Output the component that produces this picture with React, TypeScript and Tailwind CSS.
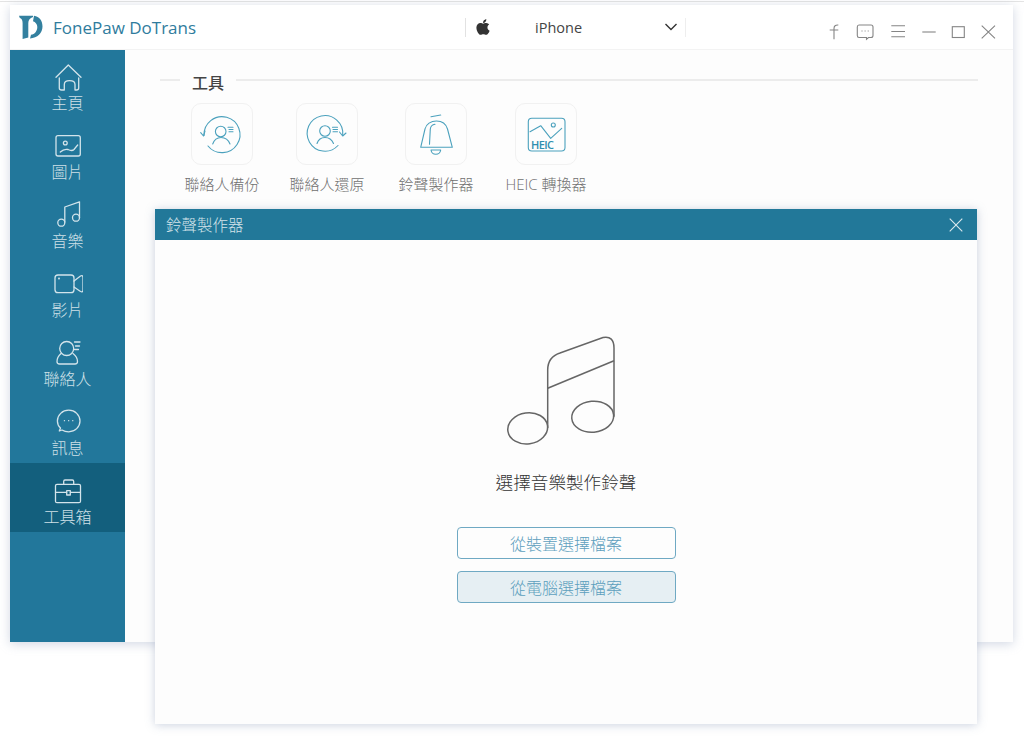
import type { ReactNode } from "react";
import { FaApple } from "react-icons/fa";

const fontClass = "font-['Open_Sans','Noto_Sans_CJK_TC',sans-serif]";

// icons are drawn in page coordinates, the viewBox crops to the slot they sit in
function SideIcon({ box, children }: { box: string; children: ReactNode }) {
  return (
    <svg width="30" height="30" viewBox={box} fill="none" stroke="#d3e4eb" strokeWidth="1.3" strokeLinecap="round" strokeLinejoin="round">
      {children}
    </svg>
  );
}

function TopIcon({ center, children }: { center: number; children: ReactNode }) {
  return (
    <svg width="20" height="20" viewBox={`${center - 10} 22 20 20`} fill="none" stroke="#858585" strokeWidth="1.1">
      {children}
    </svg>
  );
}

function ToolIcon({ box, children }: { box: string; children: ReactNode }) {
  return (
    <svg width="60" height="60" viewBox={box} fill="none" stroke="#4ba1bd" strokeWidth="1.1" strokeLinecap="round" strokeLinejoin="round">
      {children}
    </svg>
  );
}

const sideItems = [
  {
    label: "主頁",
    icon: (
      <SideIcon box="52 63 30 30">
        <path d="M55 77.3 L67.3 65 L80 77.3" />
        <path d="M58.3 78 V88 Q58.3 90 60.5 90 H63.3 V84.5 Q63.3 80.7 68.5 80.7 Q74 80.7 74 84.5 V90 H75.5 Q77.7 90 77.7 88 V78" />
      </SideIcon>
    )
  },
  {
    label: "圖片",
    icon: (
      <SideIcon box="52 132 30 30">
        <rect x="55" y="135.7" width="24.3" height="20.3" rx="2" />
        <circle cx="64.3" cy="143" r="1.9" />
        <path d="M59.3 152 Q63 148.5 67 149.5 Q71 151.5 73 149.5 Q75 147 76.7 145" />
      </SideIcon>
    )
  },
  {
    label: "音樂",
    icon: (
      <SideIcon box="52 201 30 30">
        <circle cx="60.3" cy="222.7" r="3.5" />
        <circle cx="75" cy="217.7" r="3.5" />
        <path d="M63.8 222 V207 L78.5 201.8 V217.7" />
      </SideIcon>
    )
  },
  {
    label: "影片",
    icon: (
      <SideIcon box="52 270 30 30">
        <rect x="54" y="275" width="19" height="17.7" rx="3" />
        <path d="M73 281 L79.5 276 Q82 275 82 277.5 V290 Q82 292.5 79.5 291.5 L73 287" />
        <circle cx="58" cy="278.5" r="0.4" />
      </SideIcon>
    )
  },
  {
    label: "聯絡人",
    icon: (
      <SideIcon box="52 339 30 30">
        <circle cx="65.7" cy="348.5" r="7" />
        <path d="M60 353.5 Q56 357 56 361.5 Q56 364 58.5 364 H74 Q76.5 364 76.5 361.5 Q76.5 357 72 353.5" />
        <path d="M73.5 342 H79 M74.5 346 H78.5 M73.5 349.5 H77.5" />
      </SideIcon>
    )
  },
  {
    label: "訊息",
    icon: (
      <SideIcon box="52 408 30 30">
        <path d="M61 430 Q64 431.8 67.7 431.8 C74 431.8 79 427 79 421 C79 415 74 410.2 67.7 410.2 C61.4 410.2 56.4 415 56.4 421 C56.4 424 57.5 426.3 59.5 428 L58.3 431 Z" />
        <path d="M63.4 420.7 H63.5 M67.6 420.7 H67.7 M71.7 420.7 H71.8" />
      </SideIcon>
    )
  },
  {
    label: "工具箱",
    active: true,
    icon: (
      <SideIcon box="52 477 30 30">
        <rect x="54.5" y="484.3" width="25" height="18.4" rx="1.5" />
        <path d="M62.7 484.3 V481.5 Q62.7 480 64 480 H71.3 Q72.7 480 72.7 481.5 V484.3" />
        <path d="M54.5 492.3 H65.7 M69.3 492.3 H79.5" />
        <rect x="65.7" y="490.7" width="3.6" height="4.3" />
      </SideIcon>
    )
  }
];

const tools = [
  {
    label: "聯絡人備份",
    margin: "",
    icon: (
      <ToolIcon box="192 104 60 60">
        <path d="M204 135.5 A18 18 0 1 1 208 146" />
        <path d="M200.7 132.7 L203.5 136 L205 131" />
        <circle cx="220.7" cy="131.5" r="5.3" />
        <path d="M212.7 144 Q215 137.5 221 137.5 Q227.5 137.5 230 144" />
        <path d="M228 127.3 H233 M229 129.5 H233 M229 131.7 H233" />
      </ToolIcon>
    )
  },
  {
    label: "聯絡人還原",
    margin: "ml-[15px]",
    icon: (
      <ToolIcon box="297 104 60 60">
        <path d="M338 145.5 A17.8 17.8 0 1 1 342.7 135" />
        <path d="M339.5 132 L342.7 136 L346 133" />
        <circle cx="325" cy="131" r="5.3" />
        <path d="M317 143.5 Q319 137.5 325 137.5 Q331 137.5 333.5 143.5" />
        <path d="M332.5 127.3 H337.5 M333 129.5 H337.5 M333 131.7 H337.5" />
      </ToolIcon>
    )
  },
  {
    label: "鈴聲製作器",
    margin: "ml-[19px]",
    icon: (
      <ToolIcon box="406 104 60 60">
        <path d="M431 116.8 L440.7 115" />
        <path d="M420.7 147.3 L425 129 C426 124 431 121 436.5 121 C442 121 446 124 447.5 129 L452.3 147.3 Z" />
        <path d="M429.5 144.3 L430.3 129 Q430.8 125 435 124.3" />
        <path d="M431 150 H440.7 Q440 154.3 435.8 154.3 Q431.7 154.3 431 150 Z" />
      </ToolIcon>
    )
  },
  {
    label: "HEIC 轉換器",
    margin: "ml-[20px]",
    icon: (
      <ToolIcon box="516 104 60 60">
        <rect x="528.3" y="118.3" width="36.7" height="32.7" rx="3.5" />
        <path d="M530 131.7 L540.7 125.7 L550.7 138.3 L561.7 128.3" />
        <circle cx="553.3" cy="125" r="2" />
        <text x="531" y="149" fill="#2f8fb0" stroke="none" fontSize="11" fontWeight="600" fontFamily="'Open Sans',sans-serif" textLength="23">HEIC</text>
      </ToolIcon>
    )
  }
];

function Logo() {
  return (
    <svg width="24" height="24" viewBox="0 0 24 24" fill="#33809f">
      <path d="M0 .8 H14 V2 C11 3 9.3 5 9.3 8 V22.5 L3.6 24 V8 C3.6 5 2.5 3.3 .8 3 Z" />
      <path d="M15 .8 C20.5 1.5 23.5 6 23.5 11.5 C23.5 18 18.5 23 11 23.5 L12 19.8 C15.8 19.3 18.3 16 18.3 12 C18.3 9.3 16.5 7 14 6.2 Z" />
    </svg>
  );
}

export default function App() {
  return (
    <div className={`relative h-[736px] w-[1024px] overflow-hidden bg-white ${fontClass}`}>
      <div className="mt-[1px] h-[1px] bg-[#e4e4e4]" />
      <div className="ml-[10px] mt-[3px] flex h-[637px] w-[1003px] flex-col bg-[#fdfdfd] shadow-[0_2px_10px_rgba(140,155,185,0.4)]">
        <header className="flex h-[45px] shrink-0 items-center border-b border-[#f3f3f3] bg-white">
          <div className="ml-[9px] w-[24px]">
            <Logo />
          </div>
          <div className="ml-[10px] w-[150px] whitespace-nowrap pt-[1px] text-[17px] text-[#2f7c9d]">FonePaw DoTrans</div>
          <div className="ml-[262px] h-[19px] w-[1px] bg-[#e2e2e2]" />
          <FaApple className="ml-[8px] text-[#333]" size={18} />
          <div className="ml-[43px] w-[46px] whitespace-nowrap pt-[1px] text-[14.5px] text-[#444]">iPhone</div>
          <svg className="ml-[84px]" width="12" height="8" viewBox="0 0 12 8" fill="none" stroke="#333" strokeWidth="1.4">
            <path d="M.5 1 L6 6.5 L11.5 1" />
          </svg>
          <div className="ml-[8px] h-[19px] w-[1px] bg-[#eeeeee]" />
          <div className="ml-[138px] mt-[10px] flex">
            <TopIcon center={834}>
              <path d="M838.3 25 Q834 24.7 834 28.5 V39.3 M829.7 30 H838.3" />
            </TopIcon>
            <div className="ml-[11px]">
              <TopIcon center={865}>
                <path d="M859 25 H871 Q873 25 873 27 V35.5 Q873 37.5 871 37.5 H868.5 L866.5 39.3 L866.5 37.5 H859 Q857.3 37.5 857.3 35.5 V27 Q857.3 25 859 25 Z" />
                <path d="M861.5 31 H862.5 M864.6 31 H865.6 M867.7 31 H868.7" strokeWidth="1.2" />
              </TopIcon>
            </div>
            <div className="ml-[13px]">
              <TopIcon center={898}>
                <path d="M891.3 25.7 H905 M891.3 31.5 H905 M891.3 36.7 H905" />
              </TopIcon>
            </div>
            <div className="ml-[11px]">
              <TopIcon center={929}>
                <path d="M922.3 32 H935.7" />
              </TopIcon>
            </div>
            <div className="ml-[9px]">
              <TopIcon center={958}>
                <rect x="952.3" y="26.7" width="12" height="10.8" />
              </TopIcon>
            </div>
            <div className="ml-[10px]">
              <TopIcon center={988}>
                <path d="M981.7 25.7 L995 38.3 M995 25.7 L981.7 38.3" />
              </TopIcon>
            </div>
          </div>
        </header>
        <div className="flex min-h-0 flex-1">
          <aside className="w-[115px] shrink-0 bg-[#22779b] text-[16px] text-[#cfe0e7]">
            <div className="-mt-[1px]">
              {sideItems.map((item) => (
                <div key={item.label} className={["flex h-[69px] flex-col items-center pt-[14px]", item.active ? "bg-[#135f7d]" : ""].join(" ")}>
                  <div className="ml-[1px] h-[30px]">{item.icon}</div>
                  <div className="h-[20px] font-light leading-[20px]">{item.label}</div>
                </div>
              ))}
            </div>
          </aside>
          <main className="flex-1 pl-[35px] pt-[24px]">
            <div className="flex h-[20px] w-[818px] items-start">
              <div className="mt-[5px] h-[2px] w-[20px] bg-[#ececec]" />
              <div className="ml-[12px] -mt-[1px] text-[16px] font-medium leading-[20px] text-[#444]">工具</div>
              <div className="ml-[12px] mt-[5px] h-[2px] flex-1 bg-[#ececec]" />
            </div>
            <div className="ml-[17px] mt-[9px] flex">
              {tools.map((tool) => (
                <div key={tool.label} className={["flex w-[90px] flex-col items-center", tool.margin].join(" ")}>
                  <div className="flex h-[62px] w-[62px] items-center justify-center rounded-[10px] border border-[#f1f1f1] bg-[#fdfdfd]">{tool.icon}</div>
                  <div className="mt-[9px] h-[20px] whitespace-nowrap text-[15px] font-light leading-[20px] text-[#707070]">{tool.label}</div>
                </div>
              ))}
            </div>
          </main>
        </div>
      </div>
      <section className="absolute left-[155px] top-[209px] flex h-[515px] w-[822px] flex-col bg-[#fdfdfd] shadow-[0_1px_9px_rgba(140,155,185,0.45)]">
        <div className="flex h-[31px] shrink-0 items-center justify-between bg-[#227899] pl-[11px] pr-[14px]">
          <div className="pt-[2px] text-[15.5px] font-light text-[#d3e3ea]">鈴聲製作器</div>
          <svg width="14" height="14" viewBox="0 0 14 14" fill="none" stroke="#dce9ee" strokeWidth="1.1">
            <path d="M.7 .7 L13.3 13.3 M13.3 .7 L.7 13.3" />
          </svg>
        </div>
        <div className="flex flex-col items-center pt-[96px]">
          <svg className="mr-[10px]" width="110" height="110" viewBox="506 336 110 110" fill="none" stroke="#666" strokeWidth="1.5">
            <ellipse cx="527.7" cy="428.3" rx="20" ry="15.5" transform="rotate(-8 527.7 428.3)" />
            <ellipse cx="592.7" cy="416.7" rx="21" ry="15.5" transform="rotate(-5 592.7 416.7)" />
            <path d="M547.7 428 V370 Q547.7 357 560 353 L603 337.6 Q614 335.5 614 348 V416.7" />
            <path d="M547.7 388.3 L614 360.7" />
          </svg>
          <div className="mt-[24px] h-[24px] text-[17.6px] font-light leading-[24px] text-[#333]">選擇音樂製作鈴聲</div>
          <button className="mt-[33px] h-[32px] w-[219px] rounded-[4px] border border-[#6fa9c3] bg-[#fdfdfd] pt-[1px] text-[16px] font-light text-[#5d9fbd]" type="button">
            從裝置選擇檔案
          </button>
          <button className="mt-[12px] h-[32px] w-[219px] rounded-[4px] border border-[#6fa9c3] bg-[#e6eff3] pt-[1px] text-[16px] font-light text-[#5d9fbd]" type="button">
            從電腦選擇檔案
          </button>
        </div>
      </section>
    </div>
  );
}
